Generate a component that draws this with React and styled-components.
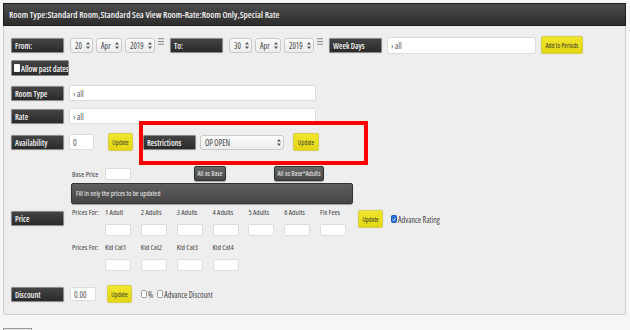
import styled, { createGlobalStyle } from "styled-components";

const GlobalStyle = createGlobalStyle`
  body {
    margin: 0;
    background: #f6f6f6;
    font-family: "Open Sans", "Noto Sans", sans-serif;
    font-stretch: 75%;
    color: #444;
  }
  input {
    font-stretch: 75%;
  }
`;

function Arrows() {
  return (
    <svg width="4" height="7" viewBox="0 0 4 7">
      <path d="M2 0 L4 2.5 L0 2.5 Z M2 7 L4 4.5 L0 4.5 Z" fill="#555" />
    </svg>
  );
}

function MenuIcon() {
  return (
    <MenuBox>
      <svg width="6" height="7" viewBox="0 0 6 7">
        <path d="M0 0.75 H6 M0 3.5 H6 M0 6.25 H6" stroke="#888" strokeWidth="1" />
      </svg>
    </MenuBox>
  );
}

function Spinner({ value, w, ml }) {
  return (
    <SelectBox $w={w} $ml={ml}>
      <span>{value}</span>
      <Arrows />
    </SelectBox>
  );
}

function Checkbox({ checked }) {
  return (
    <CheckBox $checked={checked}>
      {checked && (
        <svg width="5" height="5" viewBox="0 0 5 5">
          <path d="M0.6 2.6 L2 4 L4.4 0.8" stroke="#fff" strokeWidth="1.1" fill="none" />
        </svg>
      )}
    </CheckBox>
  );
}

const adults = ["1 Adult", "2 Adults", "3 Adults", "4 Adults", "5 Adults", "6 Adults", "Fix Fees"];
const kids = ["Kid Cat1", "Kid Cat2", "Kid Cat3", "Kid Cat4"];

export default function App() {
  return (
    <>
      <GlobalStyle />
      <Panel>
        <Header>Room Type:Standard Room,Standard Sea View Room-Rate:Room Only,Special Rate</Header>
        <Body>
          <Row $mt={10} $h={18}>
            <Label>From:</Label>
            <Spinner value="20" w={23} ml={6} />
            <Spinner value="Apr" w={26} />
            <Spinner value="2019" w={30} />
            <MenuIcon />
            <Label $ml={6}>To:</Label>
            <Spinner value="30" w={23} ml={6} />
            <Spinner value="Apr" w={26} />
            <Spinner value="2019" w={30} />
            <MenuIcon />
            <Label $ml={6}>Week Days</Label>
            <TextInput $w={149} $h={17} $ml={5} defaultValue="› all" readOnly />
            <YellowButton $w={42} $ml={5}>Add to Periods</YellowButton>
          </Row>

          <Row $mt={6} $h={16}>
            <PastBox>
              <WhiteBox />
              Allow past dates
            </PastBox>
          </Row>

          <Row $mt={9} $h={16}>
            <Label>Room Type</Label>
            <TextInput $w={247} $h={16} $ml={5} defaultValue="› all" readOnly />
          </Row>

          <Row $mt={7} $h={16}>
            <Label>Rate</Label>
            <TextInput $w={247} $h={16} $ml={5} defaultValue="› all" readOnly />
          </Row>

          <Row $mt={9} $h={18}>
            <Label>Availability</Label>
            <TextInput $w={25} $h={16} $ml={5} defaultValue="0" readOnly />
            <YellowButton $w={25} $ml={14}>Update</YellowButton>
            <RestrictGroup>
              <Highlight />
              <Label>Restrictions</Label>
              <Spinner value="OP OPEN" w={84} ml={4} />
              <YellowButton $w={26} $ml={9}>Update</YellowButton>
            </RestrictGroup>
          </Row>

          <PriceSection>
            <Label>Price</Label>
            <PriceContent>
              <BaseRow>
                <Caption>Base Price</Caption>
                <SmallInput />
                <GrayButton $w={32} $ml={63}>All as Base</GrayButton>
                <GrayButton $w={50} $ml={48}>All as Base*Adults</GrayButton>
              </BaseRow>
              <InfoBar>Fill in only the prices to be updated</InfoBar>
              <PriceGrid>
                <Caption $row={1} $col={1}>Prices For:</Caption>
                {adults.map((a, i) => (
                  <Caption key={a} $row={1} $col={i + 2} $pl={0}>{a}</Caption>
                ))}
                {adults.map((a, i) => (
                  <SmallInput key={a} $row={2} $col={i + 2} />
                ))}
                <GridUpdate>
                  <YellowButton $w={25}>Update</YellowButton>
                  <CheckLabel $ml={8}>
                    <Checkbox checked />
                    Advance Rating
                  </CheckLabel>
                </GridUpdate>
                <Caption $row={3} $col={1}>Prices For:</Caption>
                {kids.map((k, i) => (
                  <Caption key={k} $row={3} $col={i + 2} $pl={0}>{k}</Caption>
                ))}
                {kids.map((k, i) => (
                  <SmallInput key={k} $row={4} $col={i + 2} />
                ))}
              </PriceGrid>
            </PriceContent>
          </PriceSection>

          <Row $mt={15.5} $h={16}>
            <Label>Discount</Label>
            <TextInput $w={26} $h={14} $ml={6} defaultValue="0.00" readOnly />
            <YellowButton $w={25} $ml={11}>Update</YellowButton>
            <CheckLabel $ml={9}>
              <Checkbox />%
            </CheckLabel>
            <CheckLabel $ml={4}>
              <Checkbox />
              Advance Discount
            </CheckLabel>
          </Row>
        </Body>
      </Panel>
      <Footer />
    </>
  );
}

const Panel = styled.div`
  margin: 3px 0 0 3px;
  width: 623px;
  box-sizing: border-box;
  background: #eeeeee;
  border: 1px solid #cfcfcf;
  border-top: none;
  border-radius: 0 0 2px 2px;
`;

const Header = styled.div`
  height: 23px;
  box-sizing: border-box;
  margin: 0 -1px;
  padding: 0 5px;
  display: flex;
  align-items: center;
  background: linear-gradient(#4c4c4c, #2c2c2c);
  border: 1px solid #1c1c1c;
  color: #f2f2f2;
  font-size: 9px;
  font-weight: 600;
`;

const Body = styled.div`
  padding: 0 0 12px 7px;
`;

const Row = styled.div`
  display: flex;
  align-items: center;
  margin-top: ${(p) => p.$mt}px;
  height: ${(p) => p.$h}px;
`;

const Label = styled.div`
  width: 53px;
  height: 15px;
  flex: none;
  box-sizing: border-box;
  margin-left: ${(p) => p.$ml ?? 0}px;
  padding-left: 3px;
  display: flex;
  align-items: center;
  background: linear-gradient(#444, #2a2a2a);
  border: 1px solid #8c8c8c;
  border-radius: 1px;
  box-shadow: 0 0 1px rgba(0, 0, 0, 0.4);
  color: #f4f4f4;
  font-size: 8px;
  font-weight: 600;
`;

const SelectBox = styled.div`
  width: ${(p) => p.$w}px;
  height: 15px;
  flex: none;
  box-sizing: border-box;
  margin-left: ${(p) => p.$ml ?? 3}px;
  padding: 0 2px 0 4px;
  display: flex;
  align-items: center;
  justify-content: space-between;
  background: linear-gradient(#fbfbfb, #ececec);
  border: 1px solid #cacaca;
  border-radius: 3px;
  font-size: 8px;
  color: #444;
`;

const MenuBox = styled.div`
  margin-left: 3px;
  align-self: flex-start;
  margin-top: 2px;
  display: flex;
`;

const TextInput = styled.input`
  width: ${(p) => p.$w}px;
  height: ${(p) => p.$h}px;
  flex: none;
  box-sizing: border-box;
  margin: 0 0 0 ${(p) => p.$ml ?? 0}px;
  padding: 0 3px;
  background: #fff;
  border: 1px solid #dcdcdc;
  border-radius: 2px;
  font-family: inherit;
  font-size: 8.5px;
  color: #555;
  outline: none;
`;

const SmallInput = styled.input`
  grid-row: ${(p) => p.$row ?? "auto"};
  grid-column: ${(p) => p.$col ?? "auto"};
  width: 26px;
  height: 12px;
  box-sizing: border-box;
  margin: 0;
  padding: 0;
  background: #fff;
  border: 1px solid #dcdcdc;
  border-radius: 2px;
  outline: none;
`;

const YellowButton = styled.div`
  width: ${(p) => p.$w}px;
  height: 18px;
  flex: none;
  box-sizing: border-box;
  margin-left: ${(p) => p.$ml ?? 0}px;
  display: flex;
  align-items: center;
  justify-content: center;
  background: linear-gradient(#f1e62c, #e2d614);
  border: 1px solid #d8cf4a;
  border-radius: 2px;
  box-shadow: 0 0 1px rgba(0, 0, 0, 0.25);
  color: #3a3a2a;
  font-size: 6.5px;
  white-space: nowrap;
`;

const GrayButton = styled.div`
  width: ${(p) => p.$w}px;
  height: 15px;
  flex: none;
  box-sizing: border-box;
  margin-left: ${(p) => p.$ml ?? 0}px;
  display: flex;
  align-items: center;
  justify-content: center;
  background: linear-gradient(#676767, #474747);
  border: 1px solid #333;
  border-radius: 2px;
  box-shadow: 0 1px 1px rgba(0, 0, 0, 0.3);
  color: #eee;
  font-size: 7px;
  white-space: nowrap;
`;

const PastBox = styled.div`
  width: 58px;
  height: 16px;
  box-sizing: border-box;
  padding-left: 2px;
  display: flex;
  align-items: center;
  gap: 1px;
  background: linear-gradient(#444, #2a2a2a);
  border: 1px solid #8c8c8c;
  border-radius: 1px;
  color: #f4f4f4;
  font-size: 8px;
  font-weight: 600;
  white-space: nowrap;
  overflow: hidden;
`;

const WhiteBox = styled.span`
  width: 6px;
  height: 8px;
  flex: none;
  background: #fff;
  border-radius: 1px;
`;

const RestrictGroup = styled.div`
  position: relative;
  display: flex;
  align-items: center;
  margin-left: 10px;
`;

const Highlight = styled.div`
  position: absolute;
  left: -4px;
  top: -12px;
  width: 229px;
  height: 44px;
  box-sizing: border-box;
  border: 4px solid #ff0000;
  pointer-events: none;
`;

const PriceSection = styled.div`
  display: flex;
  align-items: center;
  margin-top: 15px;
`;

const PriceContent = styled.div`
  margin-left: 7px;
`;

const BaseRow = styled.div`
  display: flex;
  align-items: center;
  height: 15px;
`;

const Caption = styled.div`
  grid-row: ${(p) => p.$row ?? "auto"};
  grid-column: ${(p) => p.$col ?? "auto"};
  width: ${(p) => (p.$pl === 0 ? "auto" : "34px")};
  box-sizing: border-box;
  padding-left: ${(p) => p.$pl ?? 1}px;
  font-size: 7.5px;
  color: #444;
  white-space: nowrap;
  align-self: center;
`;

const InfoBar = styled.div`
  width: 282px;
  height: 21px;
  box-sizing: border-box;
  margin-top: 2px;
  padding-left: 4px;
  display: flex;
  align-items: center;
  background: linear-gradient(#5e5e5e, #464646);
  border: 1px solid #333;
  border-radius: 2px;
  box-shadow: 0 1px 1px rgba(0, 0, 0, 0.3);
  color: #eee;
  font-size: 7px;
`;

const PriceGrid = styled.div`
  display: grid;
  grid-template-columns: 34px repeat(6, 35.85px) 38px auto;
  grid-template-rows: repeat(4, 12px);
  row-gap: 5.5px;
  margin-top: 2px;
`;

const GridUpdate = styled.div`
  grid-column: 9;
  grid-row: 1 / 3;
  display: flex;
  align-items: center;
  margin-top: 4px;
  align-self: start;
`;

const CheckLabel = styled.div`
  display: flex;
  align-items: center;
  gap: 1px;
  margin-left: ${(p) => p.$ml ?? 0}px;
  font-size: 8px;
  color: #444;
  white-space: nowrap;
`;

const CheckBox = styled.span`
  width: 6px;
  height: 8px;
  flex: none;
  box-sizing: border-box;
  display: flex;
  align-items: center;
  justify-content: center;
  background: ${(p) => (p.$checked ? "#2a6ee0" : "#fff")};
  border: 1px solid ${(p) => (p.$checked ? "#1d55b8" : "#9a9a9a")};
  border-radius: 1.5px;
`;

const Footer = styled.div`
  margin: 13px 0 0 3px;
  width: 27px;
  height: 6px;
  border: 1px solid #9a9a9a;
  border-bottom: none;
  background: #e8e8e8;
`;
